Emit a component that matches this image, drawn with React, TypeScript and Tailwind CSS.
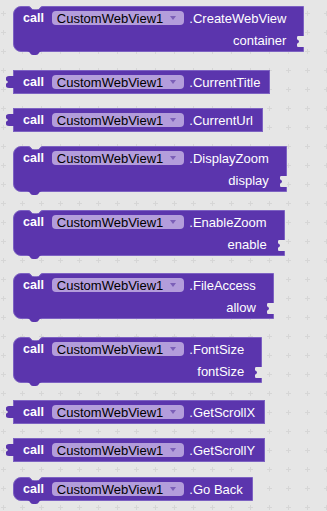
import React from "react";

type BlockDef = {
  method: string;
  arg?: string;
  kind: "stmt" | "value";
  mt: string;
};

const blocks: BlockDef[] = [
  { method: ".CreateWebView", arg: "container", kind: "stmt", mt: "mt-[6px]" },
  { method: ".CurrentTitle", kind: "value", mt: "mt-[18px]" },
  { method: ".CurrentUrl", kind: "value", mt: "mt-[14px]" },
  { method: ".DisplayZoom", arg: "display", kind: "stmt", mt: "mt-[14px]" },
  { method: ".EnableZoom", arg: "enable", kind: "stmt", mt: "mt-[18px]" },
  { method: ".FileAccess", arg: "allow", kind: "stmt", mt: "mt-[17px]" },
  { method: ".FontSize", arg: "fontSize", kind: "stmt", mt: "mt-[18px]" },
  { method: ".GetScrollX", kind: "value", mt: "mt-[17px]" },
  { method: ".GetScrollY", kind: "value", mt: "mt-[14px]" },
  { method: ".Go Back", kind: "stmt", mt: "mt-[15px]" },
];

const PURPLE = "#5b35ad";
const BG = "#e6e6e6";

function Pill() {
  return (
    <div className="flex items-center h-[14px] rounded-[4px] bg-[#b39ddb] pl-[5px] pr-[8px] text-[13px] leading-none text-black">
      <span>CustomWebView1</span>
      <svg width="6" height="4" viewBox="0 0 6 4" className="ml-[7px]">
        <path d="M0 0 H6 L3 4 Z" fill="#7b5fb8" />
      </svg>
    </div>
  );
}

function Block({ b }: { b: BlockDef }) {
  const twoRow = !!b.arg;
  const isStmt = b.kind === "stmt";
  return (
    <div
      className={`relative self-start ml-[13px] ${b.mt} bg-[#5b35ad] border border-[#7d62c2] ${
        isStmt ? "rounded-l-[8px]" : ""
      } ${twoRow ? "pr-[17px]" : "pr-[9px]"} text-white text-[13px] leading-none`}
      style={{ fontFamily: '"Liberation Sans", Arial, sans-serif' }}
    >
      <div className="flex items-center h-[22px] pl-[9px]">
        <span className="font-bold text-[12.5px]">call</span>
        <div className="ml-[8px]">
          <Pill />
        </div>
        <span className="ml-[5px]">{b.method}</span>
      </div>
      {twoRow && (
        <div className="flex items-center justify-end h-[22px]">
          <span>{b.arg}</span>
        </div>
      )}

      {isStmt && (
        <>
          <svg
            width="15"
            height="4"
            viewBox="0 0 15 4"
            className="absolute top-[-1px] left-[14px]"
          >
            <path d="M0 0 C3 0 3 3.5 6 3.5 H9 C12 3.5 12 0 15 0 Z" fill={BG} />
            <path d="M0 0.5 C3 0.5 3 4 6 4 H9 C12 4 12 0.5 15 0.5" fill="none" stroke="#7d62c2" strokeWidth="1" />
          </svg>
          <svg
            width="15"
            height="4"
            viewBox="0 0 15 4"
            className="absolute bottom-[-4px] left-[13px]"
          >
            <path d="M0 0 C3 0 3 4 6 4 H9 C12 4 12 0 15 0 Z" fill={PURPLE} />
          </svg>
        </>
      )}

      {!isStmt && (
        <svg
          width="8"
          height="12"
          viewBox="0 0 8 12"
          className="absolute left-[-8px] top-[5px]"
        >
          <path
            d="M8 0 H3 C1 0 0 1 0 2 V4 C0 5 2 5 2 6 C2 7 0 7 0 8 V10 C0 11 1 12 3 12 H8 Z"
            fill={PURPLE}
          />
        </svg>
      )}

      {twoRow && (
        <svg
          width="8"
          height="11"
          viewBox="0 0 8 11"
          className="absolute right-[-1px] top-[29px]"
        >
          <path
            d="M8 0 H2 C1 0 1 1 1 2 V3 C1 4 3 4 3 5.5 C3 7 1 7 1 8 V9 C1 10 1 11 2 11 H8 Z"
            fill={BG}
          />
        </svg>
      )}
    </div>
  );
}

export default function App() {
  return (
    <div className="relative w-[327px] h-[511px] overflow-hidden bg-[#e6e6e6]">
      <svg className="absolute inset-0" width="327" height="511">
        <defs>
          <pattern id="grid" x="0" y="0" width="19" height="19" patternUnits="userSpaceOnUse">
            <rect x="1" y="13" width="5" height="1" fill="#d6d6d6" />
            <rect x="3" y="11" width="1" height="5" fill="#d6d6d6" />
          </pattern>
        </defs>
        <rect width="327" height="511" fill="url(#grid)" />
      </svg>
      <div className="relative flex flex-col">
        {blocks.map((b) => (
          <Block key={b.method} b={b} />
        ))}
      </div>
    </div>
  );
}
